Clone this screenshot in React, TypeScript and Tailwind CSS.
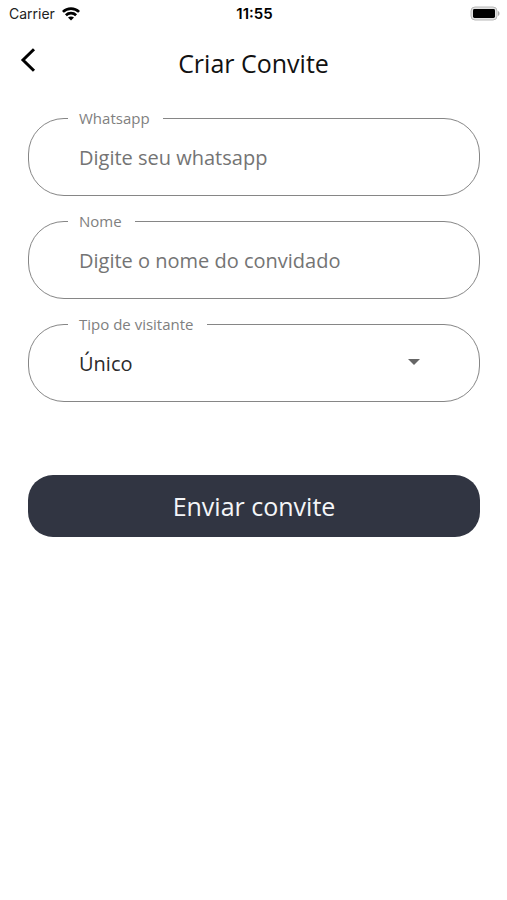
import { useState, type ReactNode } from 'react';

interface FieldProps {
  id: string;
  label: string;
  children: ReactNode;
}

// Outlined field, the legend cuts the notch in the border
function Field({ id, label, children }: FieldProps) {
  return (
    <fieldset className="relative min-w-0 rounded-[36px] border border-[#868686]">
      <legend className="ml-[39px] h-5 pl-[11px] pr-[13px] text-[15px] leading-5 text-[#808080]">
        <label htmlFor={id}>{label}</label>
      </legend>
      {children}
    </fieldset>
  );
}

const controlClass =
  'block h-[67px] w-full appearance-none rounded-[36px] bg-transparent px-[50px] pb-2 text-xl outline-none';

function StatusBar() {
  return (
    <div className="grid h-7 grid-cols-3 items-center pl-[9px] pr-[7px] font-['Inter',sans-serif] text-sm text-[#222]">
      <div className="flex items-center gap-[7px]">
        <span>Carrier</span>
        <svg width="18" height="14" viewBox="0 0 18 14" fill="none" stroke="#000" strokeWidth="2.7" aria-hidden="true">
          <path d="M0.9 4.9C5.4 0.4 12.6 0.4 17.1 4.9" />
          <path d="M3.9 8.2C6.7 5.4 11.3 5.4 14.1 8.2" />
          <path d="M9 13.6L6 10.6C7.8 9 10.2 9 12 10.6Z" fill="#000" stroke="none" />
        </svg>
      </div>
      <span className="text-center text-[15px] font-semibold text-black">11:55</span>
      <svg className="justify-self-end" width="30" height="16" viewBox="0 0 30 16" aria-hidden="true">
        <rect x="1" y="1" width="26" height="13" rx="4" fill="#e2e2e2" stroke="#b8b8b8" />
        <rect x="3" y="3" width="22" height="9" rx="1.4" fill="#000" />
        <path d="M28 5C30 5.8 30 9.2 28 10Z" fill="#aaa" />
      </svg>
    </div>
  );
}

export default function App() {
  const [whatsapp, setWhatsapp] = useState('');
  const [nome, setNome] = useState('');
  const [tipo, setTipo] = useState('unico');

  return (
    <div className="min-h-screen bg-white font-['Open_Sans',sans-serif]">
      <StatusBar />

      {/* Header */}
      <header className="grid h-[70px] grid-cols-[56px_1fr_56px] items-center">
        <button type="button" aria-label="Voltar" className="flex h-14 items-center pb-[6px] pl-5">
          <svg width="16" height="24" viewBox="0 0 16 24" fill="none" stroke="#000" strokeWidth="3" aria-hidden="true">
            <path d="M14 1.2L3 12L14 22.8" />
          </svg>
        </button>
        <h1 className="text-center text-[25px] leading-8 text-[#111]">Criar Convite</h1>
      </header>

      {/* Form */}
      <form className="pl-7 pr-[27px] pt-[10px]" onSubmit={e => e.preventDefault()}>
        <div className="flex flex-col gap-[15px]">
          <Field id="whatsapp" label="Whatsapp">
            <input
              id="whatsapp"
              type="tel"
              value={whatsapp}
              onChange={e => setWhatsapp(e.target.value)}
              placeholder="Digite seu whatsapp"
              className={`${controlClass} text-[#333] placeholder:text-[#747474]`}
            />
          </Field>
          <Field id="nome" label="Nome">
            <input
              id="nome"
              type="text"
              value={nome}
              onChange={e => setNome(e.target.value)}
              placeholder="Digite o nome do convidado"
              className={`${controlClass} text-[#333] placeholder:text-[#747474]`}
            />
          </Field>
          <Field id="tipo" label="Tipo de visitante">
            <select
              id="tipo"
              value={tipo}
              onChange={e => setTipo(e.target.value)}
              className={`${controlClass} text-[#2b2b2b]`}
            >
              <option value="unico">Único</option>
            </select>
            <svg
              className="pointer-events-none absolute right-[59px] top-[25px]"
              width="12"
              height="6"
              viewBox="0 0 12 6"
              fill="#666"
              aria-hidden="true"
            >
              <path d="M0 0H12L6 6Z" />
            </svg>
          </Field>
        </div>

        <button
          type="submit"
          className="mt-[73px] h-[62px] w-full rounded-[25px] bg-[#313542] text-[25px] leading-8 text-[#f4f5f8]"
        >
          Enviar convite
        </button>
      </form>
    </div>
  );
}
